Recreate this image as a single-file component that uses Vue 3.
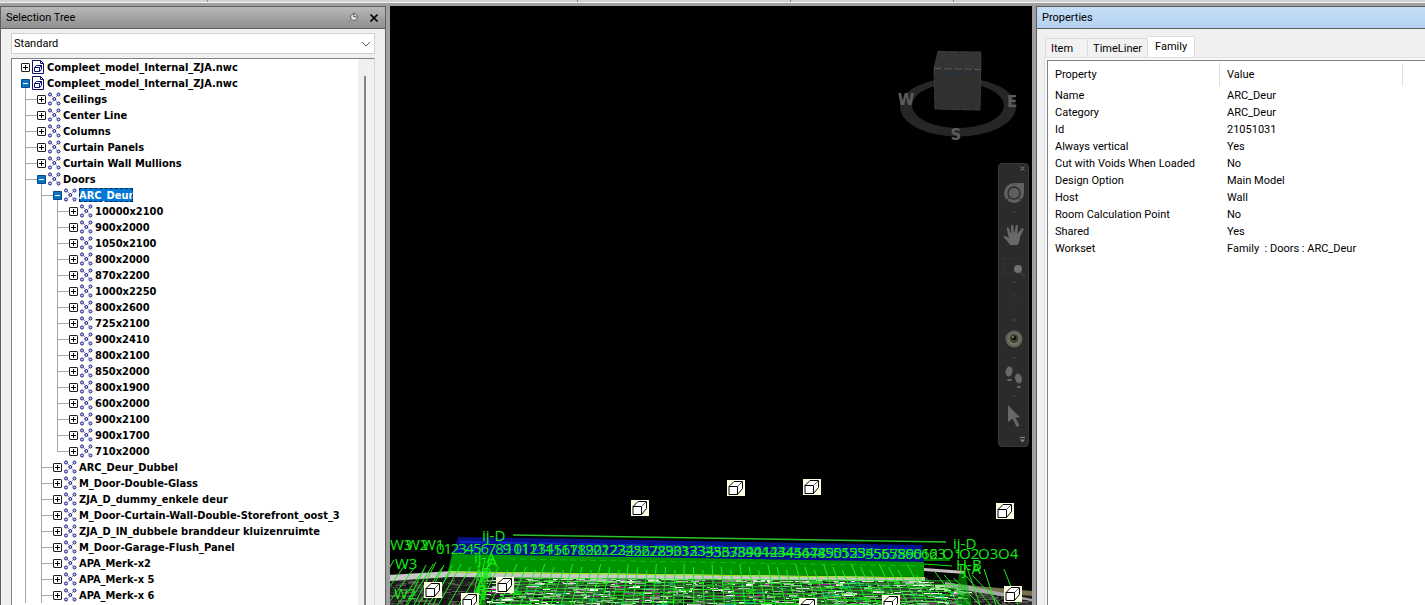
<script setup>
import { ref } from 'vue'

const mode = ref('Standard')
const activeTab = ref('Family')
const tabs = ['Item', 'TimeLiner', 'Family']

const sizes = [
  '10000x2100', '900x2000', '1050x2100', '800x2000', '870x2200', '1000x2250', '800x2600', '725x2100',
  '900x2410', '800x2100', '850x2000', '800x1900', '600x2000', '900x2100', '900x1700', '710x2000',
]
const families = [
  'ARC_Deur_Dubbel', 'M_Door-Double-Glass', 'ZJA_D_dummy_enkele deur',
  'M_Door-Curtain-Wall-Double-Storefront_oost_3', 'ZJA_D_IN_dubbele branddeur kluizenruimte',
  'M_Door-Garage-Flush_Panel', 'APA_Merk-x2', 'APA_Merk-x 5', 'APA_Merk-x 6',
]
const rows = [
  { depth: 0, label: 'Compleet_model_Internal_ZJA.nwc', file: true },
  { depth: 0, label: 'Compleet_model_Internal_ZJA.nwc', file: true, open: true },
  ...['Ceilings', 'Center Line', 'Columns', 'Curtain Panels', 'Curtain Wall Mullions'].map((label) => ({ depth: 1, label })),
  { depth: 1, label: 'Doors', open: true },
  { depth: 2, label: 'ARC_Deur', open: true, selected: true },
  ...sizes.map((label, i) => ({ depth: 3, label, last: i === sizes.length - 1 })),
  ...families.map((label) => ({ depth: 2, label })),
]

const properties = [
  ['Name', 'ARC_Deur'],
  ['Category', 'ARC_Deur'],
  ['Id', '21051031'],
  ['Always vertical', 'Yes'],
  ['Cut with Voids When Loaded', 'No'],
  ['Design Option', 'Main Model'],
  ['Host', 'Wall'],
  ['Room Calculation Point', 'No'],
  ['Shared', 'Yes'],
  ['Workset', 'Family\u00a0 : Doors : ARC_Deur'],
]

// Seeded generator, so the model's clutter is the same on every load
let seed = 7
const rnd = () => {
  seed = (seed * 16807) % 2147483647
  return seed / 2147483647
}
const pick = (list) => list[Math.floor(rnd() * list.length)]

const debris = Array.from({ length: 2000 }, () => {
  const x = Math.floor(rnd() * 642)
  const top = x < 130 ? 110 : 107 + Math.max(0, (x - 500) * 0.17)
  const y = Math.floor(top + rnd() * (136 - top))
  const edge = x < 90 || x > 570
  return {
    x, y,
    w: 2 + Math.floor(rnd() * 12),
    h: rnd() > 0.8 ? 2 : 1,
    fill: edge
      ? pick(['#222', '#333', '#4a4642', '#111', '#5a5450', '#3a3634'])
      : y < top + 5
        ? pick(['#fff', '#ddd', '#bbb', '#b8e0a0', '#888', '#30c830', '#1a6a1a'])
        : pick(['#111', '#222', '#fff', '#ddd', '#999', '#777', '#1c8c1c', '#083808', '#3c3c3c', '#bbb', '#145014', '#14b414', '#1cc81c', '#b0189c', '#10a080', '#9cc89c']),
  }
})
const meshLines = Array.from({ length: 62 }, (_, i) => {
  const x = 6 + i * 9.6
  const lean = (300 - x) * 0.065
  return { x1: x + lean * 0.5, y1: 94 + (i % 3) * 3 + (x > 530 ? 8 : 0), x2: x - lean, y2: 135 }
})
const crossLines = Array.from({ length: 9 }, (_, i) => ({ y1: 108 + i * 3.3, y2: 111 + i * 3.5 }))

const numbers = [
  ...Array.from({ length: 10 }, (_, i) => ({ t: String(i), x: 46 + i * 7.4, y: 84 })),
  ...Array.from({ length: 54 }, (_, i) => ({ t: String(i + 10), x: 115 + i * 8, y: 84 + i * 0.1 })),
]
const sceneLabels = [
  { t: 'W3', x: 0, y: 80 }, { t: 'W2', x: 16, y: 80 }, { t: 'W1', x: 32, y: 80 },
  { t: 'W3', x: 5, y: 99 }, { t: 'W2', x: 4, y: 129 },
  { t: 'ij-D', x: 92, y: 71 }, { t: 'ij-A', x: 84, y: 93 }, { t: 'A', x: 98, y: 97 }, { t: 'B', x: 92, y: 108 },
  { t: 'M', x: 86, y: 111 }, { t: 'A', x: 86, y: 120 }, { t: 'B', x: 87, y: 125 }, { t: 'N', x: 85, y: 130 },
  { t: 'ij-D', x: 563, y: 79 }, { t: 'O1', x: 552, y: 89 }, { t: 'O2', x: 569, y: 89 }, { t: 'O3', x: 588, y: 89 },
  { t: 'O4', x: 608, y: 89 }, { t: 'H-B', x: 566, y: 100 }, { t: 'ij-A', x: 569, y: 104 },
]
const markers = [
  [241, 30], [337, 10], [413, 9], [606, 33], [34, 112], [106, 107], [71, 123], [409, 128], [492, 125], [614, 116],
]
</script>

<template>
  <div class="app">
    <div class="ribbon-edge"><i></i><i></i><i></i><i></i></div>
    <main class="workspace">
      <section class="panel selection">
        <header class="titlebar">
          <h2>Selection Tree</h2>
          <button aria-label="Auto hide" class="title-button">
            <svg width="12" height="12" viewBox="0 0 12 12">
              <path d="M1 11 L5 7" stroke="#777" />
              <path d="M3.500 4 L7 1 L11 4.500 L9 8 L6 8.500 L4 6.500 Z" fill="#e4e4e4" stroke="#666" />
              <path d="M7 1.500 L6.500 4.500 L10 5" fill="none" stroke="#555" />
            </svg>
          </button>
          <button aria-label="Close" class="title-button">
            <svg width="10" height="10" viewBox="0 0 10 10"><path d="M1.5 1.5 L8.5 8.5 M8.5 1.5 L1.5 8.5" stroke="#000" stroke-width="1.7" /></svg>
          </button>
        </header>
        <div class="selection-body">
          <div class="select-wrap">
            <select v-model="mode" aria-label="Tree mode"><option>Standard</option></select>
            <svg class="chevron" width="10" height="6" viewBox="0 0 10 6"><path d="M1 1 L5 5 L9 1" fill="none" stroke="#555" /></svg>
          </div>
          <div class="tree">
            <ul class="tree-rows" role="tree">
              <li v-for="(row, i) in rows" :key="i" class="row" role="treeitem" :aria-selected="!!row.selected">
                <span
                  v-for="d in row.depth" :key="d" class="guide"
                  :class="{ branch: d === row.depth, last: row.last && d === row.depth }"
                ></span>
                <span class="toggle-cell" :class="{ child: row.depth > 0, open: row.open }">
                  <button class="toggle" :class="{ minus: row.open }" :aria-label="row.open ? 'Collapse' : 'Expand'">
                    <svg width="9" height="9" viewBox="0 0 9 9">
                      <path :d="row.open ? 'M2 4.5 H7' : 'M2 4.5 H7 M4.5 2 V7'" :stroke="row.open ? '#fff' : '#000'" />
                    </svg>
                  </button>
                </span>
                <svg v-if="row.file" class="icon" width="14" height="16" viewBox="0 0 14 16">
                  <path d="M0.500 1.500 H8.500 L11.500 4.500 V14.500 H0.500 Z" fill="#fff" stroke="#10106a" />
                  <path d="M8.500 1.500 V4.500 H11.500" fill="none" stroke="#10106a" />
                  <path d="M2.500 8.500 H7.500 V12.500 H2.500 Z M2.500 8.500 L4.500 6.500 H9.500 L7.500 8.500 M9.500 6.500 V10.500 L7.500 12.500" fill="none" stroke="#10106a" />
                </svg>
                <svg v-else class="icon" width="14" height="16" viewBox="0 0 14 16">
                  <g fill="#c8c8f8" stroke="#1c1c80">
                    <circle cx="2" cy="3.500" r="1.500" /><circle cx="10.500" cy="3.500" r="1.500" />
                    <circle cx="6.300" cy="8" r="1.500" />
                    <circle cx="2" cy="12.500" r="1.500" /><circle cx="10.500" cy="12.500" r="1.500" />
                  </g>
                  <path d="M4 5.500h1M8 5.500h1M4 10.500h1M8 10.500h1" stroke="#9c9cc0" />
                </svg>
                <span class="label" :class="{ selected: row.selected }">{{ row.label }}</span>
              </li>
            </ul>
            <div class="scroll-track"><div class="scroll-thumb"></div></div>
          </div>
        </div>
      </section>

      <section class="viewport" aria-label="Model view">
        <svg class="viewcube" width="126" height="96" viewBox="895 46 126 96">
          <path fill-rule="evenodd" fill="#262626" d="M900 107 a58 29.5 0 1 0 116 0 a58 29.5 0 1 0 -116 0 Z M912 105.500 a46 22.500 0 1 0 92 0 a46 22.500 0 1 0 -92 0 Z" />
          <path d="M938 51.500 L981 52 L981 69.500 L934 68.500 Z" fill="#343434" />
          <path d="M934 68.500 L981 69.500 L980 110 L935 109 Z" fill="#303030" />
          <path d="M943 71 H971 V75 H943 Z" fill="#2a3036" />
          <path d="M938 51.500 L981 52 L980 110 L935 109 L934 68.500 Z" fill="none" stroke="#3c3c3c" stroke-dasharray="10 1" />
          <path d="M934 68.500 L981 69.500" stroke="#5c5c5c" stroke-dasharray="8 2" />
          <g class="compass" text-anchor="middle">
            <text x="906" y="105">W</text><text x="956" y="140">S</text><text x="1012" y="107">E</text>
          </g>
        </svg>

        <nav class="navbar" aria-label="Navigation">
          <button class="nav-close" aria-label="Close bar">
            <svg width="5" height="5" viewBox="0 0 5 5"><path d="M.5 .5 L4.500 4.500 M4.500 .5 L.5 4.500" stroke="#888" /></svg>
          </button>
          <button class="tool" aria-label="Steering wheel">
            <svg width="22" height="22" viewBox="0 0 22 22">
              <path d="M11 1 H21 V11 A10 10 0 1 1 11 1 Z" fill="#606060" />
              <circle cx="11" cy="11" r="6" fill="#606060" stroke="#2b2b2b" stroke-width="1.300" />
              <path d="M4 18 L7 15 M18 18 L15 15" stroke="#2b2b2b" fill="none" />
            </svg>
          </button>
          <span class="tick"></span>
          <button class="tool tall" aria-label="Pan">
            <svg width="22" height="22" viewBox="0 0 22 22">
              <path d="M7 21 C5 18 3 15 .8 13.500 C0 12 2 11.500 3.500 12.500 L6 14.500 L3.800 5 C3.500 3 5.300 2.700 6 4.500 L8.300 10 L8 2 C8 .2 10 .2 10.300 2 L11.300 9.500 L12.800 1.800 C13.200 .2 15 .6 14.900 2.300 L14.300 10 L18.400 4.800 C19.500 3.500 21 4.500 20.300 6 L17 13 C17 17 16 19 14.500 21 Z" fill="#686868" />
            </svg>
          </button>
          <button class="tool short" aria-label="Zoom window">
            <svg width="26" height="24" viewBox="0 0 26 24">
              <path d="M2.500 2.500 H18.500 V17.500 H2.500 Z" fill="none" stroke="#363636" stroke-dasharray="2 1" />
              <path d="M18 15 L24 21" stroke="#3c3c3c" stroke-width="2" /><circle cx="17" cy="13" r="4" fill="#707070" />
            </svg>
          </button>
          <span class="tick"></span>
          <button class="tool" aria-label="Orbit">
            <svg width="20" height="20" viewBox="0 0 20 20">
              <path d="M10 4 V16 M5 13 L15 7 M4 9 L16 11" stroke="#363636" stroke-dasharray="1 3" />
              <circle cx="10" cy="4" r="1" fill="#383838" />
            </svg>
          </button>
          <span class="tick"></span>
          <button class="tool" aria-label="Look">
            <svg width="20" height="20" viewBox="0 0 20 20">
              <circle cx="10" cy="10" r="8.500" fill="#626259" /><circle cx="10" cy="10" r="6" fill="#77776c" />
              <circle cx="10" cy="9.500" r="4.500" fill="#3f4228" /><circle cx="10" cy="9" r="2.200" fill="#111" /><circle cx="9" cy="8" r="1" fill="#999" />
            </svg>
          </button>
          <span class="tick"></span>
          <button class="tool" aria-label="Walk">
            <svg width="20" height="24" viewBox="0 0 20 24" fill="#686868">
              <ellipse cx="5" cy="6.500" rx="3.400" ry="5.200" transform="rotate(12 5 6.500)" /><path d="M3 14 H8 L7 16 H4 Z" />
              <ellipse cx="14.500" cy="13.500" rx="3.300" ry="5" transform="rotate(-16 14.500 13.500)" /><path d="M13 21 H17 L16 23 H13.500 Z" />
            </svg>
          </button>
          <span class="tick"></span>
          <button class="tool wide-gap" aria-label="Select">
            <svg width="14" height="24" viewBox="0 0 14 24"><path d="M1 1 L13 13.500 H8.300 L12.500 21.500 L9.800 23 L5.500 14.800 L1 18 Z" fill="#686868" /></svg>
          </button>
          <button class="nav-menu" aria-label="Bar options">
            <svg width="5" height="6" viewBox="0 0 5 6"><path d="M0 .5 H5" stroke="#888" /><path d="M0 2.500 H5 L2.500 5.500 Z" fill="#888" /></svg>
          </button>
        </nav>

        <svg class="scene" viewBox="0 0 642 135">
          <path d="M0 104 L60 102 L534 108 L560 112 L642 126 V135 H0 Z" fill="#1c1c1c" />
          <path d="M130 106 L534 109 L575 135 H110 Z" fill="#2c4a2c" />
          <path d="M555 113 L642 121 V126 L555 118 Z" fill="#77704e" />
          <g shape-rendering="crispEdges">
            <rect v-for="(r, i) in debris" :key="i" :x="r.x" :y="r.y" :width="r.w" :height="r.h" :fill="r.fill" />
          </g>
          <path d="M0 105 L62 101 L535 107 L535 111 L60 107 L0 111 Z" fill="#c8c8c8" />
          <path d="M534 98 L575 101 L575 104 L534 101 Z" fill="#c8c0c0" />
          <path d="M555 112 L580 116 L642 129 L642 131 L555 117 Z" fill="#a8a8a8" />
          <path d="M68 67 L532 75 L534 93 L62 86 Z" fill="#04128c" />
          <path d="M70 72 L532 80 M66 79 L532 86" stroke="#0c2cc0" stroke-width="2" stroke-dasharray="30 9" />
          <path d="M62 84 L534 92 V107 L58 101 Z" fill="#009400" />
          <path d="M120 89 L534 96" stroke="#14b814" stroke-dasharray="6 4" fill="none" />
          <path d="M60 102 L534 108" stroke="#8cf000" stroke-width="1" />
          <path d="M123 65 L556 72" stroke="#2cc42c" stroke-width="1.500" />
          <path d="M534 90 H560 M534 94 L562 96" stroke="#00f000" />
          <g stroke="#1cec1c" stroke-width="1" fill="none">
            <path v-for="(l, i) in meshLines" :key="i" :d="`M${l.x1} ${l.y1} L${l.x2} ${l.y2}`" />
            <path v-for="(l, i) in crossLines" :key="'c' + i" :d="`M110 ${l.y1} L568 ${l.y2}`" stroke-opacity=".7" />
            <path d="M36 95 L16 135 M46 92 L24 135 M54 95 L34 135 M62 95 L43 135 M4 90 L0 97" />
            <path d="M594 99 L606 135 M614 99 L628 135 M576 95 L590 135 M95 90 L84 135 M99 90 L90 135 M90 92 L82 135" />
          </g>
          <path d="M569 104 L575 101 L582 135 H566 Z M89 110 L98 104 L96 135 H85 Z" fill="#08c808" fill-opacity=".5" />
          <g class="scene-text">
            <text v-for="(n, i) in numbers" :key="i" :x="n.x" :y="n.y">{{ n.t }}</text>
            <text v-for="(n, i) in sceneLabels" :key="'l' + i" :x="n.x" :y="n.y">{{ n.t }}</text>
          </g>
          <g v-for="([x, y], i) in markers" :key="'m' + i" :transform="`translate(${x} ${y})`">
            <rect width="18" height="16" fill="#ffffe4" />
            <path d="M2 6.500 L7 1.500 H15.500 V8.500 L10.500 14.500 H2 Z" fill="#fff" stroke="#000" />
            <path d="M2 6.500 H10.500 V14.500" fill="none" stroke="#000" /><path d="M10.500 6.500 L15.500 1.500" stroke="#555" />
          </g>
        </svg>
      </section>

      <section class="panel properties">
        <header class="titlebar active"><h2>Properties</h2></header>
        <div class="properties-body">
          <div class="tabs" role="tablist">
            <button
              v-for="tab in tabs" :key="tab" class="tab" :class="{ current: tab === activeTab }"
              role="tab" :aria-selected="tab === activeTab" @click="activeTab = tab"
            >{{ tab }}</button>
          </div>
          <div class="tab-page">
            <table>
              <colgroup><col class="name-col" /><col class="value-col" /><col /></colgroup>
              <thead><tr><th>Property</th><th>Value</th><td></td></tr></thead>
              <tbody>
                <tr v-for="[name, value] in properties" :key="name"><td>{{ name }}</td><td>{{ value }}</td><td></td></tr>
              </tbody>
            </table>
          </div>
        </div>
      </section>
    </main>
  </div>
</template>

<style>
body {
  overflow: hidden;
}
</style>

<style scoped>
* {
  box-sizing: border-box;
}
.app {
  display: flex;
  flex-direction: column;
  height: 100vh;
  background: #a0a0a0;
  color: #000;
  font-family: Roboto, "Liberation Sans", sans-serif;
  font-size: 11px;
}
button {
  margin: 0;
  padding: 0;
  border: 0;
  background: none;
  font: inherit;
  color: inherit;
}
svg {
  display: block;
}
.ribbon-edge {
  display: grid;
  grid-template-columns: 208fr 370fr 213fr 163fr 471fr;
  flex: none;
  height: 3px;
  margin-bottom: 3px;
  background: #d2d2d6;
  border-bottom: 1px solid #f4f4f4;
}
.ribbon-edge i {
  border-right: 1px solid #888;
}
.workspace {
  display: grid;
  grid-template-columns: 386px minmax(0, 1fr) 389px;
  column-gap: 4px;
  flex: 1;
  min-height: 0;
}
.panel {
  display: flex;
  flex-direction: column;
  min-width: 0;
  min-height: 0;
  background: #f0f0f0;
  border: solid #5f5f5f;
  border-width: 1px 1px 0;
}
.properties {
  border-right: 0;
}
.titlebar {
  display: flex;
  align-items: center;
  gap: 10px;
  flex: none;
  height: 22px;
  padding: 0 6px 0 5px;
  background: linear-gradient(#b8b8b8, #8f8f8f);
  border-bottom: 1px solid #5f5f5f;
}
.titlebar.active {
  background: linear-gradient(#c4def6, #b4d2f0);
}
.titlebar h2 {
  flex: 1;
  margin: 0;
  font-size: 11px;
  font-weight: 400;
}
.selection-body {
  display: flex;
  flex-direction: column;
  gap: 4px;
  flex: 1;
  min-height: 0;
  padding: 4px 10px 0;
}
.select-wrap {
  position: relative;
  flex: none;
}
.select-wrap select {
  appearance: none;
  display: block;
  width: 100%;
  height: 21px;
  padding: 0 2px;
  border: 1px solid #cfcfcf;
  border-radius: 0;
  background: #fff;
  color: #000;
  font: inherit;
}
.chevron {
  position: absolute;
  right: 4px;
  top: 8px;
  pointer-events: none;
}
.tree {
  display: flex;
  flex: 1;
  min-height: 0;
  background: #fff;
  border: solid #828282;
  border-width: 1px 1px 0;
  border-right-color: #d8d8d8;
  overflow: hidden;
}
.tree-rows {
  flex: 1;
  min-width: 0;
  margin: 0;
  padding: 0 0 0 5px;
  list-style: none;
  font-family: "DejaVu Sans Condensed", "DejaVu Sans", sans-serif;
  font-weight: 700;
}
.row {
  display: flex;
  height: 16px;
  line-height: 16px;
  white-space: nowrap;
}
.guide,
.toggle-cell {
  flex: none;
  width: 16px;
  height: 16px;
  background-repeat: no-repeat;
}
.guide {
  background-image: linear-gradient(#a8a8a8, #a8a8a8);
  background-size: 1px 16px;
  background-position: 8px 0;
}
.guide.branch {
  background-image: linear-gradient(#a8a8a8, #a8a8a8), linear-gradient(#a8a8a8, #a8a8a8);
  background-size: 1px 16px, 8px 1px;
  background-position: 8px 0, 8px 8px;
}
.guide.last {
  background-size: 1px 8px, 8px 1px;
}
.toggle-cell {
  display: grid;
  place-items: center;
}
.toggle-cell.child {
  background-image: linear-gradient(#a8a8a8, #a8a8a8);
  background-size: 4px 1px;
  background-position: 0 8px;
}
.toggle-cell.open {
  background-image: linear-gradient(#a8a8a8, #a8a8a8), linear-gradient(#a8a8a8, #a8a8a8);
  background-size: 1px 4px, 4px 1px;
  background-position: 8px 12px, 0 8px;
}
.toggle-cell.open:not(.child) {
  background-size: 1px 4px, 0 0;
}
.toggle {
  display: grid;
  place-items: center;
  width: 9px;
  height: 9px;
  background: #fff;
  outline: 1px solid #222;
  outline-offset: -1px;
  border-radius: 1px;
}
.toggle.minus {
  background: #0a74c8;
  outline-color: #0a4a8a;
}
.icon {
  flex: none;
  margin-left: -1px;
  margin-right: 1px;
}
.label {
  height: 14px;
  margin-top: 1px;
  line-height: 15px;
}
.label.selected {
  background: #0078d7;
  color: #fff;
  outline: 1px dashed #0a2a50;
  outline-offset: -1px;
}
.scroll-track {
  flex: none;
  width: 16px;
  padding-top: 17px;
  background: #f0f0f0;
}
.scroll-thumb {
  width: 2px;
  height: 100%;
  margin-left: 6px;
  background: #858585;
}
.viewport {
  position: relative;
  min-width: 0;
  overflow: hidden;
  background: #000;
}
.viewcube {
  position: absolute;
  top: 40px;
  right: 11px;
}
.compass {
  fill: #5c5c5c;
  font: 700 15px "DejaVu Sans", sans-serif;
}
.navbar {
  position: absolute;
  top: 157px;
  right: 3px;
  display: flex;
  flex-direction: column;
  align-items: center;
  width: 31px;
  background: #2b2b2b;
  border: 1px solid #3a3a3a;
  border-radius: 4px;
}
.nav-close,
.nav-menu {
  align-self: flex-end;
  height: 12px;
  padding-right: 3px;
}
.nav-close svg {
  margin-bottom: 3px;
}
.tool {
  display: grid;
  place-items: center;
  height: 34px;
}
.tool.tall {
  height: 41px;
}
.tool.short {
  height: 25px;
}
.tool.wide-gap {
  height: 36px;
}
.tick {
  width: 4px;
  height: 4px;
  background: linear-gradient(#383838, #383838) center / 4px 2px no-repeat;
}
.scene {
  position: absolute;
  left: 0;
  bottom: 0;
  width: 100%;
}
.scene-text {
  fill: #14ec14;
  font: 400 15px "Open Sans", "Liberation Sans", sans-serif;
}
.properties-body {
  display: flex;
  flex-direction: column;
  flex: 1;
  padding: 7px 0 0 7px;
}
.tabs {
  display: flex;
  align-items: flex-end;
  padding-left: 1px;
}
.tab {
  height: 19px;
  padding: 0 5px;
  border: solid #dcdcdc;
  border-width: 1px 1px 0 0;
  background: #f2f2f2;
}
.tab:first-child {
  padding-right: 14px;
  border-left-width: 1px;
}
.tab.current {
  height: 21px;
  padding: 0 7px 2px;
  background: #fff;
}
.tab-page {
  flex: 1;
  padding: 2px 0 0 2px;
  background: #f9f9f9;
  border: solid #e0e0e0;
  border-width: 1px 0 0 1px;
}
table {
  width: 100%;
  height: 100%;
  display: block;
  background: #fff;
  border: solid #828282;
  border-width: 1px 0 0 1px;
  border-collapse: collapse;
}
.name-col {
  width: 172px;
}
.value-col {
  width: 183px;
}
th,
td {
  height: 17px;
  padding: 0 0 0 7px;
  font-weight: 400;
  line-height: 17px;
  text-align: left;
  white-space: nowrap;
}
thead th {
  height: 26px;
  background: linear-gradient(#e0e0e0, #e0e0e0) right center / 1px 23px no-repeat;
}
</style>
